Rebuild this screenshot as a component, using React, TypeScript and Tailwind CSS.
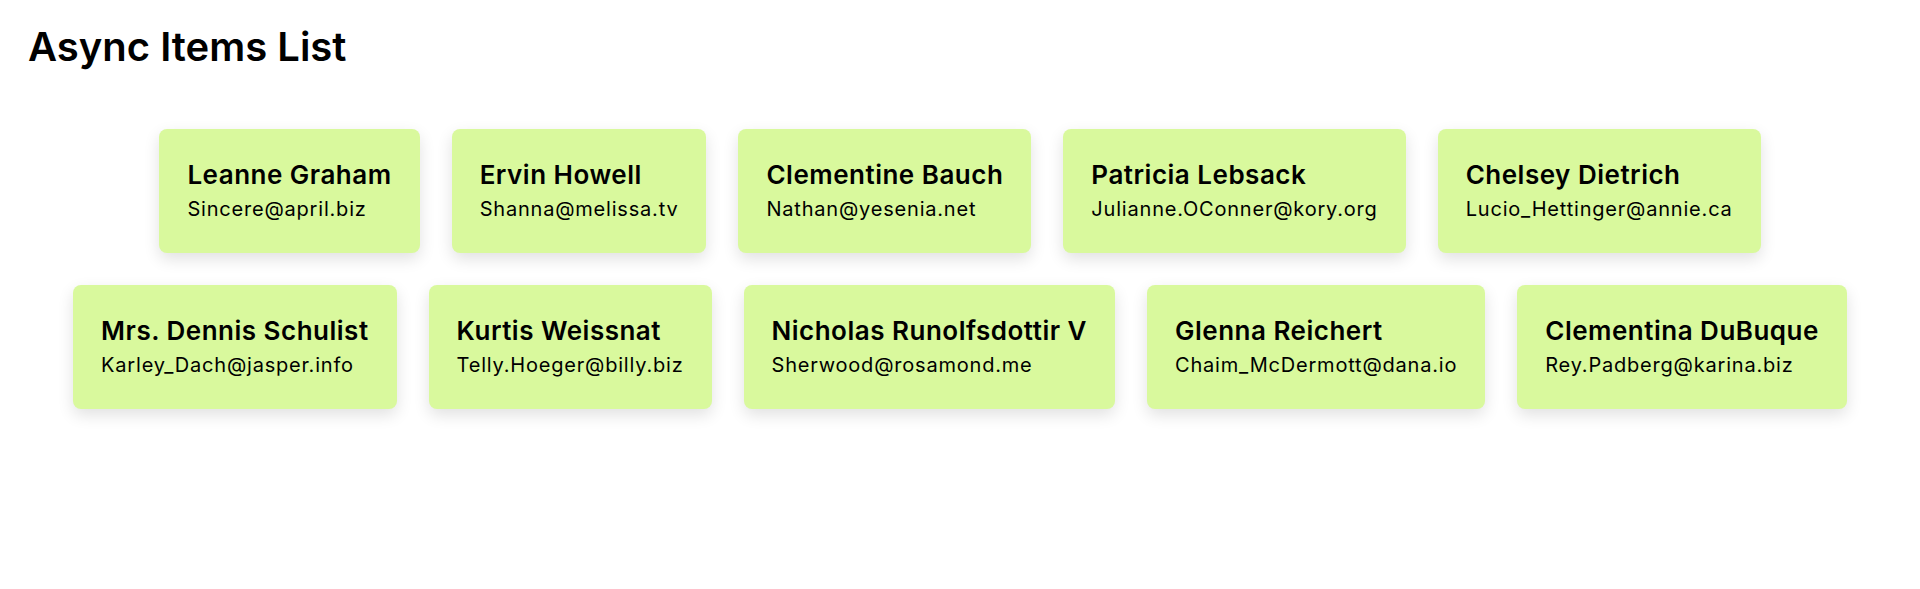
import React from "react";

const users = [
  { id: 1, name: "Leanne Graham", email: "Sincere@april.biz" },
  { id: 2, name: "Ervin Howell", email: "Shanna@melissa.tv" },
  { id: 3, name: "Clementine Bauch", email: "Nathan@yesenia.net" },
  { id: 4, name: "Patricia Lebsack", email: "Julianne.OConner@kory.org" },
  { id: 5, name: "Chelsey Dietrich", email: "Lucio_Hettinger@annie.ca" },
  { id: 6, name: "Mrs. Dennis Schulist", email: "Karley_Dach@jasper.info" },
  { id: 7, name: "Kurtis Weissnat", email: "Telly.Hoeger@billy.biz" },
  { id: 8, name: "Nicholas Runolfsdottir V", email: "Sherwood@rosamond.me" },
  { id: 9, name: "Glenna Reichert", email: "Chaim_McDermott@dana.io" },
  { id: 10, name: "Clementina DuBuque", email: "Rey.Padberg@karina.biz" },
];

const App = () => {
  return (
    <div className="min-h-screen bg-white px-7 pt-[23px] text-black font-['Inter',sans-serif]">
      <h1 className="text-[40px] leading-[48px] font-semibold">
        Async Items List
      </h1>

      <div className="mt-[58px] flex flex-wrap justify-center gap-8">
        {users.map((user) => (
          <div
            key={user.id}
            className="bg-[#d9f99d] rounded-lg px-7 pt-[30px] pb-8 shadow-[0_6px_16px_rgba(0,0,0,0.12)]"
          >
            <h3 className="text-[26px] leading-[31px] font-semibold tracking-[0.5px]">
              {user.name}
            </h3>
            <p className="mt-[7px] text-[20px] leading-[24px] tracking-[0.8px]">
              {user.email}
            </p>
          </div>
        ))}
      </div>
    </div>
  );
};

export default App;
